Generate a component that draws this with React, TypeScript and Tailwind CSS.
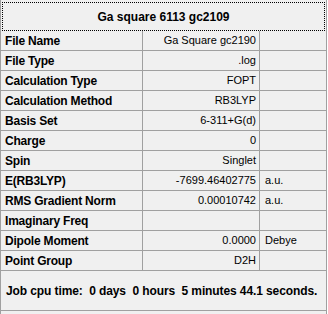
import React from "react";

type Row = { label: string; value: string; unit?: string };

const rows: Row[] = [
  { label: "File Name", value: "Ga Square gc2190" },
  { label: "File Type", value: ".log" },
  { label: "Calculation Type", value: "FOPT" },
  { label: "Calculation Method", value: "RB3LYP" },
  { label: "Basis Set", value: "6-311+G(d)" },
  { label: "Charge", value: "0" },
  { label: "Spin", value: "Singlet" },
  { label: "E(RB3LYP)", value: "-7699.46402775", unit: "a.u." },
  { label: "RMS Gradient Norm", value: "0.00010742", unit: "a.u." },
  { label: "Imaginary Freq", value: "" },
  { label: "Dipole Moment", value: "0.0000", unit: "Debye" },
  { label: "Point Group", value: "D2H" },
];

export default function App() {
  return (
    <div
      className="w-[327px] h-[314px] bg-[#f0f0f0] border-l border-r border-[#a0a0a0] text-black flex flex-col"
      style={{ fontFamily: '"Liberation Sans", Arial, sans-serif' }}
    >
      {/* title with focus rectangle */}
      <div className="h-[31px] pt-[2px] pl-[1px] pr-[1px] flex">
        <div className="flex-1 border border-dotted border-black flex items-center justify-center text-[12px] font-bold">
          Ga square 6113 gc2109
        </div>
      </div>

      {rows.map((r) => (
        <div key={r.label} className="h-[20px] flex border-b border-[#a0a0a0]">
          <div className="w-[142px] border-r border-[#a0a0a0] pl-[4px] flex items-center text-[12px] font-bold tracking-[-0.2px] whitespace-nowrap">
            {r.label}
          </div>
          <div className="w-[117px] border-r border-[#a0a0a0] pr-[3px] flex items-center justify-end text-[11px] whitespace-nowrap">
            {r.value}
          </div>
          <div className="flex-1 pl-[5px] flex items-center text-[11px] whitespace-nowrap">
            {r.unit ?? ""}
          </div>
        </div>
      ))}

      <div className="h-[40px] flex items-center pl-[5px] border-b border-[#a0a0a0] text-[12px] font-bold whitespace-pre tracking-[-0.1px]">
        {"Job cpu time:  0 days  0 hours  5 minutes 44.1 seconds."}
      </div>
    </div>
  );
}
